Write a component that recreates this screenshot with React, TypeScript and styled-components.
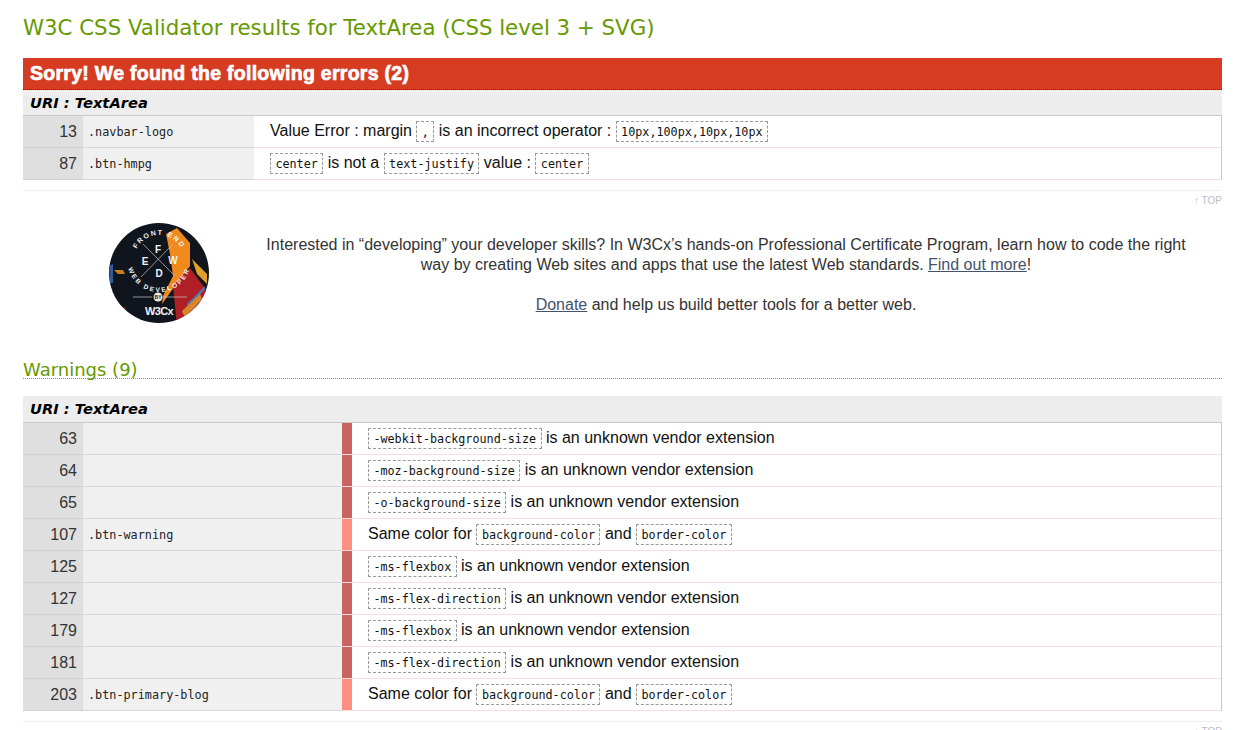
import styled, { createGlobalStyle } from "styled-components";

const GlobalStyle = createGlobalStyle`
    html, body {
        margin: 0;
        padding: 0;
        height: 730px;
        overflow: hidden;
        background: #fff;
    }
    body {
        font-family: "Liberation Sans", Arial, sans-serif;
        font-size: 16px;
        color: #000;
    }
`;

const Page = styled.main`
    padding: 0 18px 0 23px;
`;

const Title = styled.h2`
    margin: 0;
    padding-top: 14px;
    height: 58px;
    box-sizing: border-box;
    font-family: "DejaVu Sans", Verdana, sans-serif;
    font-size: 21.3px;
    line-height: 28px;
    font-weight: 400;
    color: #669900;
`;

const ErrorBanner = styled.h3`
    margin: 0;
    height: 32px;
    padding-left: 7px;
    background: #d53c22;
    border-bottom: 1px dotted #333;
    box-sizing: border-box;
    font-family: "Liberation Sans", Arial, sans-serif;
    font-size: 19.5px;
    letter-spacing: 0.28px;
    line-height: 31px;
    font-weight: 700;
    color: #fff;
    -webkit-text-stroke: 0.7px #fff;
`;

const UriBar = styled.div<{ $height: number }>`
    height: ${(p) => p.$height}px;
    padding-left: 7px;
    background: #ededed;
    font-family: "DejaVu Sans", Verdana, sans-serif;
    font-size: 14.7px;
    line-height: ${(p) => p.$height}px;
    font-weight: 700;
    font-style: italic;
    color: #000;
`;

const Rows = styled.div`
    border-top: 1px solid #c8c8c8;
    border-right: 1px solid #c8c8c8;
`;

const Row = styled.div<{ $columns: string }>`
    display: grid;
    grid-template-columns: ${(p) => p.$columns};
    grid-template-rows: 32px;
    height: 32px;
`;

const LineNo = styled.div`
    padding-right: 6px;
    background: #dfdfdf;
    border-bottom: 1px solid #d0d0d0;
    font-size: 16px;
    line-height: 31px;
    text-align: right;
    color: #333;
`;

const Selector = styled.div`
    padding-left: 5px;
    background: #f0f0f0;
    border-bottom: 1px solid #d8d8d8;
    font-family: "DejaVu Sans Mono", monospace;
    font-size: 11.8px;
    line-height: 33px;
    color: #222;
`;

const LevelBar = styled.div<{ $level: 1 | 2 }>`
    background: ${(p) => (p.$level === 1 ? "#cb6363" : "#ff8f80")};
    border-bottom: 1px solid #ffdcdc;
`;

const Message = styled.div<{ $indent: number }>`
    min-height: 0;
    padding-left: ${(p) => p.$indent}px;
    border-bottom: 1px solid #ffdcdc;
    font-size: 16px;
    line-height: 30px;
    white-space: nowrap;
    color: #111;
`;

const Code = styled.code`
    display: inline-block;
    height: 21px;
    padding: 0 4.4px;
    box-sizing: border-box;
    border: 1px dashed #999;
    font-family: "DejaVu Sans Mono", monospace;
    font-size: 11.75px;
    line-height: 21px;
    vertical-align: 0;
    color: #111;
`;

const Rule = styled.hr`
    margin: 10px 0 0;
    height: 1px;
    border: 0;
    background: #eeeef8;
`;

const TopLink = styled.div`
    height: 20px;
    font-size: 10px;
    line-height: 20px;
    text-align: right;
    color: #bbbbcc;
`;

const Promo = styled.section`
    display: flex;
    height: 149px;
    padding-top: 1px;
    box-sizing: border-box;
`;

const LogoBox = styled.div`
    flex: 0 0 236px;
    padding: 11px 0 0 86px;
    box-sizing: border-box;
`;

const PromoText = styled.div`
    flex: 1;
    padding: 23px 29px 0 0;
    font-size: 16px;
    line-height: 20px;
    text-align: center;
    color: #333;

    p {
        margin: 0 0 20px;
    }

    a {
        color: #43536b;
        text-decoration: underline;
    }
`;

const SectionTitle = styled.h3`
    margin: 0;
    height: 19px;
    box-sizing: border-box;
    border-bottom: 1px dotted #8f9a6c;
    font-family: "DejaVu Sans", Verdana, sans-serif;
    font-size: 18px;
    line-height: 20px;
    font-weight: 400;
    color: #669900;
`;

const SectionGap = styled.div`
    height: 17px;
`;

const Logo = () => (
    <svg width="100" height="100" viewBox="0 0 100 100">
        <defs>
            <clipPath id="logo-clip">
                <circle cx="50" cy="50" r="50" />
            </clipPath>
            <path id="logo-top" d="M25 37 A25 25 0 0 1 75 37" />
            <path id="logo-bottom" d="M18 37 A32 32 0 0 0 82 37" />
        </defs>
        <g clipPath="url(#logo-clip)">
            <rect width="100" height="100" fill="#10141c" />
            <path d="M57 11 L68 5 L81 20 L81 43 L68 60 L53 81 L54 73 L64 53 L61 31 Z" fill="#f08a1c" />
            <path d="M64 63 L81 45 L98 68 L81 98 L68 103 Z" fill="#b01f26" />
            <path d="M83 36 L98 51 L98 61 L88 51 Z" fill="#e0a02a" />
            <path d="M78 81 L96 63 L96 66 L79 85 Z" fill="#4c76b6" />
            <path d="M73 88 L91 71 L93 76 L76 95 Z" fill="#d8862a" />
            <path d="M0 43 L4 41 L4 60 L1 60 Z" fill="#2f5c96" />
            <path d="M5 47 L14 47 L16 51 L9 51 Z" fill="#c8801f" />
            <path d="M16 83 L18 91 L14 92 Z" fill="#b01f26" />
            <g stroke="#c8c8c8" strokeWidth="0.7">
                <line x1="34" y1="21" x2="66" y2="53" />
                <line x1="64" y1="21" x2="32" y2="54" />
                <line x1="24" y1="74" x2="43" y2="74" />
                <line x1="55" y1="74" x2="78" y2="74" />
            </g>
            <g fontFamily="'Liberation Sans', Arial, sans-serif" fontWeight="700" fill="#f2f2f2" textAnchor="middle">
                <text fontSize="7" letterSpacing="1.6">
                    <textPath href="#logo-top" startOffset="50%">
                        FRONT END
                    </textPath>
                </text>
                <text fontSize="6.5" letterSpacing="2">
                    <textPath href="#logo-bottom" startOffset="50%">
                        WEB DEVELOPER
                    </textPath>
                </text>
                <text x="49" y="30" fontSize="10">F</text>
                <text x="36" y="42" fontSize="10">E</text>
                <text x="64" y="41" fontSize="10">W</text>
                <text x="50" y="54" fontSize="10">D</text>
                <circle cx="49" cy="74" r="4.5" fill="#e9e9e9" />
                <text x="49" y="76" fontSize="5" fill="#10141c">BY</text>
                <text x="50" y="92" fontSize="11" letterSpacing="-0.6">W3Cx</text>
            </g>
        </g>
    </svg>
);

const errorColumns = "60px 171px 1fr";
const warningColumns = "60px 259px 10px 1fr";

const vendor = (prop: string) => (
    <>
        <Code>{prop}</Code> is an unknown vendor extension
    </>
);

const sameColor = (
    <>
        Same color for <Code>background-color</Code> and <Code>border-color</Code>
    </>
);

const warnings: { line: number; selector: string; level: 1 | 2; message: React.ReactNode }[] = [
    { line: 63, selector: "", level: 1, message: vendor("-webkit-background-size") },
    { line: 64, selector: "", level: 1, message: vendor("-moz-background-size") },
    { line: 65, selector: "", level: 1, message: vendor("-o-background-size") },
    { line: 107, selector: ".btn-warning", level: 2, message: sameColor },
    { line: 125, selector: "", level: 1, message: vendor("-ms-flexbox") },
    { line: 127, selector: "", level: 1, message: vendor("-ms-flex-direction") },
    { line: 179, selector: "", level: 1, message: vendor("-ms-flexbox") },
    { line: 181, selector: "", level: 1, message: vendor("-ms-flex-direction") },
    { line: 203, selector: ".btn-primary-blog", level: 2, message: sameColor },
];

const App: React.FC = () => {
    return (
        <Page>
            <GlobalStyle />
            <Title>W3C CSS Validator results for TextArea (CSS level 3 + SVG)</Title>
            <ErrorBanner>Sorry! We found the following errors (2)</ErrorBanner>
            <UriBar $height={25}>URI : TextArea</UriBar>
            <Rows>
                <Row $columns={errorColumns}>
                    <LineNo>13</LineNo>
                    <Selector>.navbar-logo</Selector>
                    <Message $indent={16}>
                        Value Error : margin <Code>,</Code> is an incorrect operator : <Code>10px,100px,10px,10px</Code>
                    </Message>
                </Row>
                <Row $columns={errorColumns}>
                    <LineNo>87</LineNo>
                    <Selector>.btn-hmpg</Selector>
                    <Message $indent={16}>
                        <Code>center</Code> is not a <Code>text-justify</Code> value : <Code>center</Code>
                    </Message>
                </Row>
            </Rows>
            <Rule />
            <TopLink>↑ TOP</TopLink>
            <Promo>
                <LogoBox>
                    <Logo />
                </LogoBox>
                <PromoText>
                    <p>
                        Interested in “developing” your developer skills? In W3Cx’s hands-on Professional Certificate Program, learn how to code the right way by creating Web sites and apps that use the latest Web standards. <a href="#more">Find out more</a>!
                    </p>
                    <p>
                        <a href="#donate">Donate</a> and help us build better tools for a better web.
                    </p>
                </PromoText>
            </Promo>
            <SectionTitle>Warnings (9)</SectionTitle>
            <SectionGap />
            <UriBar $height={26}>URI : TextArea</UriBar>
            <Rows>
                {warnings.map((w) => (
                    <Row $columns={warningColumns} key={w.line}>
                        <LineNo>{w.line}</LineNo>
                        <Selector>{w.selector}</Selector>
                        <LevelBar $level={w.level} />
                        <Message $indent={16}>{w.message}</Message>
                    </Row>
                ))}
            </Rows>
            <Rule />
            <TopLink>↑ TOP</TopLink>
        </Page>
    );
};

export default App;
